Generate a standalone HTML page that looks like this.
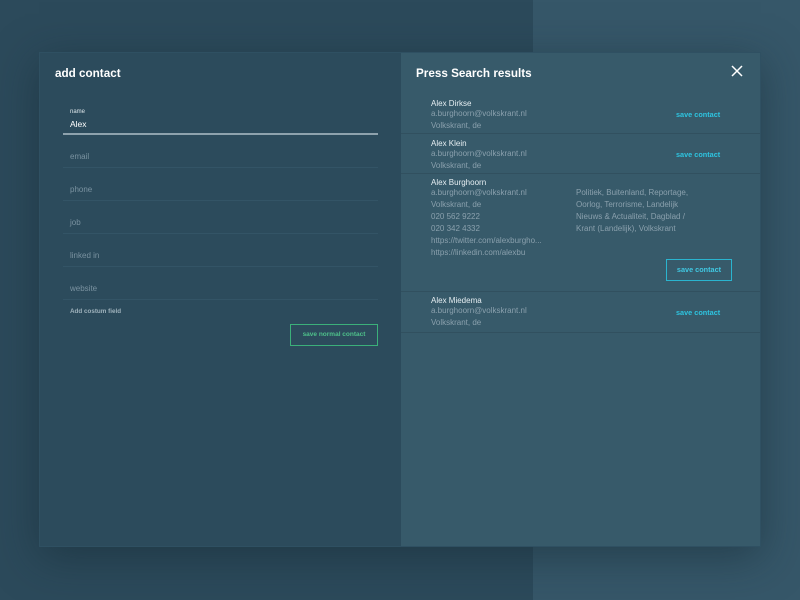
<!DOCTYPE html>
<html><head><style>
*{margin:0;padding:0;box-sizing:border-box}
body{width:800px;height:600px;overflow:hidden;position:relative;background:#365769;font-family:"Liberation Sans",sans-serif}
.bgl{position:absolute;left:0;top:0;width:533px;height:600px;background:#2c4a5b}
.modal{position:absolute;left:39px;top:52px;width:722px;height:495px;border:1px solid #2f5062;box-shadow:0 10px 40px rgba(20,40,50,.5)}
.lp{position:absolute;left:0;top:0;width:361px;height:100%;background:#2c4b5c}
.rp{position:absolute;left:361px;top:0;right:0;height:100%;background:#375a6a}
.t{position:absolute;color:#fff}
.h{font-size:11.7px;font-weight:bold}
.f{position:absolute;left:23px;width:315px;border-bottom:1px solid #335466;height:1px}
.ph{position:absolute;left:30px;font-size:8px;color:#7a92a0}
.g{color:#8aa0ad;font-size:8px;position:absolute;line-height:12px}
.n{color:#e6eef2;font-size:8px;position:absolute}
.sc{position:absolute;color:#2ec4e0;font-size:7.3px;font-weight:bold}
.sep{position:absolute;left:0;right:0;height:1px;background:#31505f}
</style></head><body>
<div class="bgl"></div>
<div class="modal">
<div class="lp">
<div class="t h" style="left:15px;top:14px">add contact</div>
<div class="t" style="left:30px;top:56px;font-size:6px;color:#dfe7eb">name</div>
<div class="t" style="left:30px;top:66px;font-size:8.5px">Alex</div>
<div style="position:absolute;left:23px;top:80px;width:315px;height:2px;background:#8ea2ad"></div>
<div class="ph" style="top:99px">email</div><div class="f" style="top:114px"></div>
<div class="ph" style="top:132px">phone</div><div class="f" style="top:147px"></div>
<div class="ph" style="top:165px">job</div><div class="f" style="top:180px"></div>
<div class="ph" style="top:198px">linked in</div><div class="f" style="top:213px"></div>
<div class="ph" style="top:231px">website</div><div class="f" style="top:246px"></div>
<div class="t" style="left:30px;top:255px;font-size:6.3px;font-weight:bold;color:#9fb2bc">Add costum field</div>
<div style="position:absolute;left:250px;top:271px;width:88px;height:22px;border:1px solid #3bb07a;color:#4ec08a;font-size:6.5px;font-weight:bold;text-align:center;line-height:20px">save normal contact</div>
</div>
<div class="rp">
<div class="t h" style="left:15px;top:14px">Press Search results</div>
<svg style="position:absolute;left:330px;top:12px" width="12" height="12"><path d="M1 1L11 11M11 1L1 11" stroke="#fff" stroke-width="1.5"/></svg>
<div class="n" style="left:30px;top:46px">Alex Dirkse</div>
<div class="g" style="left:30px;top:55px">a.burghoorn@volkskrant.nl<br>Volkskrant, de</div>
<div class="sc" style="left:275px;top:57px">save contact</div>
<div class="sep" style="top:80px"></div>
<div class="n" style="left:30px;top:86px">Alex Klein</div>
<div class="g" style="left:30px;top:95px">a.burghoorn@volkskrant.nl<br>Volkskrant, de</div>
<div class="sc" style="left:275px;top:97px">save contact</div>
<div class="sep" style="top:120px"></div>
<div class="n" style="left:30px;top:125px">Alex Burghoorn</div>
<div class="g" style="left:30px;top:134px">a.burghoorn@volkskrant.nl<br>Volkskrant, de<br>020 562 9222<br>020 342 4332<br>https://twitter.com/alexburgho...<br>https://linkedin.com/alexbu</div>
<div class="g" style="left:175px;top:134px">Politiek, Buitenland, Reportage,<br>Oorlog, Terrorisme, Landelijk<br>Nieuws &amp; Actualiteit, Dagblad /<br>Krant (Landelijk), Volkskrant</div>
<div style="position:absolute;left:265px;top:206px;width:66px;height:22px;border:1px solid #2ab4cf;color:#40c8e2;font-size:7.3px;font-weight:bold;text-align:center;line-height:20px">save contact</div>
<div class="sep" style="top:238px"></div>
<div class="n" style="left:30px;top:243px">Alex Miedema</div>
<div class="g" style="left:30px;top:252px">a.burghoorn@volkskrant.nl<br>Volkskrant, de</div>
<div class="sc" style="left:275px;top:255px">save contact</div>
<div class="sep" style="top:279px"></div>
</div>
</div>
</body></html>
